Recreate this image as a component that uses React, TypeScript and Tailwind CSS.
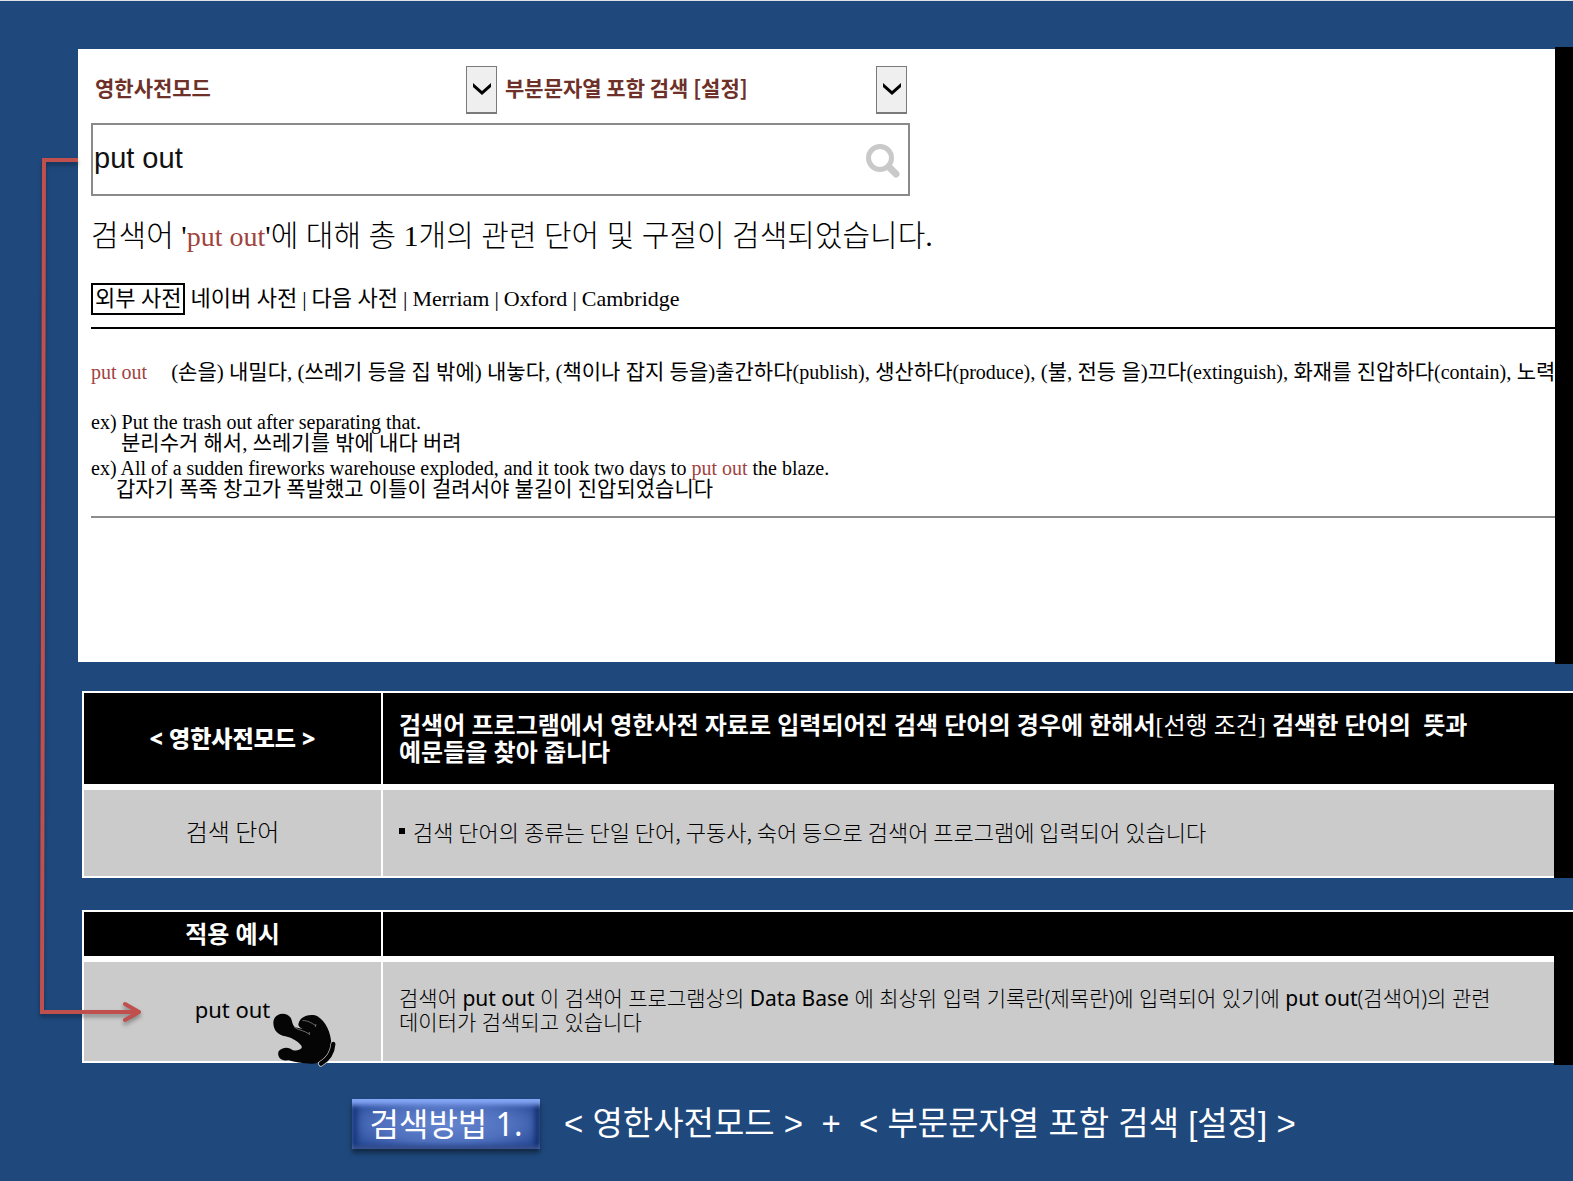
import type { ReactNode } from "react";

function Chevron() {
  return (
    <span className="pointer-events-none absolute right-0 top-0 flex h-full w-[31px] items-center justify-center border border-b-2 border-[#7a7a7a] bg-[#efefef]">
      <svg width="20" height="16" viewBox="0 0 20 16">
        <path d="M1 1v4l9 8 9-8V1l-9 8z" fill="#000" />
      </svg>
    </span>
  );
}

function ModeSelect({ name, value }: { name: string; value: string }) {
  return (
    <div className="relative h-12 flex-1">
      <select
        aria-label={name}
        className="h-full w-full appearance-none bg-white pb-1 pl-1 pr-8 text-[21px] font-bold text-[#6e3129] outline-none"
      >
        <option>{value}</option>
      </select>
      <Chevron />
    </div>
  );
}

function Hit({ children }: { children: ReactNode }) {
  return <span className="text-[#a0433f]">{children}</span>;
}

function Latin({ children }: { children: ReactNode }) {
  return <span className="text-[20px]">{children}</span>;
}

function Connector() {
  return (
    <svg
      className="pointer-events-none absolute left-0 top-0 drop-shadow-[0_3px_2px_rgba(0,0,0,0.35)]"
      width="160"
      height="1040"
      viewBox="0 0 160 1040"
      fill="none"
      stroke="#c0504d"
      strokeWidth="4"
    >
      <path d="M78 159H44L42 1011H138" />
      <path d="M125 1003L139 1011L125 1019" strokeLinecap="round" strokeLinejoin="round" />
    </svg>
  );
}

function Hand() {
  return (
    <svg
      className="pointer-events-none absolute left-[188px] top-[50px]"
      width="66"
      height="56"
      viewBox="66 66 198 168"
    >
      <path
        d="M98 71C82 71 70 83 70 98C70 122 85 134 106 139C128 144 146 155 155 169C158 177 142 183 128 181C118 170 96 171 86 184C80 200 93 214 116 211C135 216 160 222 190 221C222 219 240 192 244 165C244 128 225 86 195 76C172 71 148 82 145 104C145 108 150 113 158 117L136 112C126 104 128 94 122 83C116 75 108 71 98 71Z"
        fill="#050505"
      />
      <path
        d="M132 111C144 121 160 120 178 132M178 126V135M158 92C172 91 184 98 197 107M198 102L196 111"
        fill="none"
        stroke="#9a9a9a"
        strokeWidth="2"
      />
      <path d="M250 162C248 188 236 207 213 221" fill="none" stroke="#d6d6d6" strokeWidth="17" strokeLinecap="round" />
      <path d="M250 162C248 188 236 207 213 221" fill="none" stroke="#050505" strokeWidth="13" strokeLinecap="round" />
    </svg>
  );
}

export default function App() {
  return (
    <div className="relative min-h-screen overflow-hidden border-t border-[#dfe3e6] bg-[#1f497d] pb-8 pt-[46px] font-['Noto_Sans','Noto_Sans_CJK_KR',sans-serif] text-black">
      <section className="ml-[78px] flex">
        <div className="my-[2px] min-w-0 flex-1 overflow-hidden bg-white pb-36 pl-[13px] pt-[17px] font-['Liberation_Serif','Noto_Sans_CJK_KR',serif]">
          <form className="w-full max-w-[819px]">
            <div className="mr-[3px] flex gap-1 font-['Noto_Sans_CJK_KR',sans-serif]">
              <ModeSelect name="사전 모드" value="영한사전모드" />
              <ModeSelect name="검색 설정" value="부분문자열 포함 검색 [설정]" />
            </div>
            <div className="mt-[9px] flex h-[73px] items-center border-2 border-[#8a8a8a] pl-px pr-2">
              <input
                aria-label="검색어"
                defaultValue="put out"
                className="h-full min-w-0 flex-1 pb-[2px] font-['Liberation_Sans',sans-serif] text-[29px] text-[#111] outline-none"
              />
              <button type="button" aria-label="검색">
                <svg width="36" height="36" viewBox="0 0 36 36" fill="none" stroke="#c9c9c9">
                  <circle cx="16" cy="16" r="11.5" strokeWidth="5" />
                  <path d="M25 25l7 7" strokeWidth="7" strokeLinecap="round" />
                </svg>
              </button>
            </div>
          </form>

          <p className="mt-[22px] whitespace-nowrap text-[30px] font-light leading-9">
            검색어 '
            <span className="text-[28px]">
              <Hit>put out</Hit>
            </span>
            '에 대해 총 1개의 관련 단어 및 구절이 검색되었습니다.
          </p>

          <nav className="mt-7 flex h-8 items-center gap-[5px] whitespace-nowrap text-[22px] leading-7">
            <span className="flex h-8 items-center border-2 border-black px-[2px]">외부 사전</span>
            <a href="#naver">네이버 사전</a>|
            <a href="#daum">다음 사전</a>|
            <a href="#merriam">Merriam</a>|
            <a href="#oxford">Oxford</a>|
            <a href="#cambridge">Cambridge</a>
          </nav>
          <hr className="mt-3 border-t-2 border-black" />

          <div className="mt-[31px] flex gap-6 whitespace-nowrap text-[21px] leading-6">
            <Latin>
              <Hit>put out</Hit>
            </Latin>
            <p>
              (손을) 내밀다, (쓰레기 등을 집 밖에) 내놓다, (책이나 잡지 등을)출간하다<Latin>(publish)</Latin>, 생산하다
              <Latin>(produce)</Latin>, (불, 전등 을)끄다<Latin>(extinguish)</Latin>, 화재를 진압하다
              <Latin>(contain)</Latin>, 노력
            </p>
          </div>

          <div className="mt-7 flex flex-col gap-1 whitespace-nowrap text-[21px] leading-[21px]">
            <div>
              <p className="text-[20px]">ex) Put the trash out after separating that.</p>
              <p className="pl-[30px]">분리수거 해서, 쓰레기를 밖에 내다 버려</p>
            </div>
            <div>
              <p className="text-[20px]">
                ex) All of a sudden fireworks warehouse exploded, and it took two days to <Hit>put out</Hit> the blaze.
              </p>
              <p className="pl-[25px]">갑자기 폭죽 창고가 폭발했고 이틀이 걸려서야 불길이 진압되었습니다</p>
            </div>
          </div>
          <hr className="mt-4 border-t-2 border-[#8c8c8c]" />
        </div>
        <div className="w-[18px] bg-black" />
      </section>

      <section className="ml-[82px] mt-[27px] flex border-t-2 border-white">
        <table className="flex-1 table-fixed border-separate border-spacing-0">
          <colgroup>
            <col className="w-[299px]" />
            <col />
          </colgroup>
          <thead>
            <tr className="h-[97px] bg-black text-white">
              <th className="border-b-[6px] border-l-2 border-white text-[23px] font-black">&lt; 영한사전모드 &gt;</th>
              <th className="border-b-[6px] border-l-2 border-white px-4 text-left text-[24px] font-bold leading-[26px]">
                검색어 프로그램에서 영한사전 자료로 입력되어진 검색 단어의 경우에 한해서
                <span className="font-['Liberation_Serif','Noto_Sans_CJK_KR',serif] font-normal">[선행 조건]</span> 검색한
                단어의&nbsp; 뜻과
                <br />
                예문들을 찾아 줍니다
              </th>
            </tr>
          </thead>
          <tbody>
            <tr className="h-[88px] bg-[#cbcbcb] font-['Noto_Sans_CJK_KR',sans-serif] font-light">
              <td className="border-b-2 border-l-2 border-white pb-1 text-center text-[24px]">검색 단어</td>
              <td className="border-b-2 border-l-2 border-white px-4 pb-1 text-[22px]">
                <div className="flex items-center gap-2">
                  <span className="h-[6px] w-[6px] bg-black" />
                  검색 단어의 종류는 단일 단어, 구동사, 숙어 등으로 검색어 프로그램에 입력되어 있습니다
                </div>
              </td>
            </tr>
          </tbody>
        </table>
        <div className="w-[19px] bg-black" />
      </section>

      <section className="ml-[82px] mt-8 flex border-t-2 border-white">
        <table className="flex-1 table-fixed border-separate border-spacing-0">
          <colgroup>
            <col className="w-[299px]" />
            <col />
          </colgroup>
          <thead>
            <tr className="h-[50px] bg-black text-white">
              <th className="border-b-[6px] border-l-2 border-white text-[24px] font-bold leading-8">적용 예시</th>
              <th className="border-b-[6px] border-l-2 border-white" />
            </tr>
          </thead>
          <tbody>
            <tr className="h-[101px] bg-[#cbcbcb]">
              <td className="relative border-b-2 border-l-2 border-white pb-1 text-center text-[22px]">
                put out
                <Hand />
              </td>
              <td className="border-b-2 border-l-2 border-white px-4 pb-1 text-[21px] font-light leading-6">
                검색어 <span className="font-normal">put out</span> 이 검색어 프로그램상의{" "}
                <span className="font-normal">Data Base</span> 에 최상위 입력 기록란(제목란)에 입력되어 있기에{" "}
                <span className="font-normal">put out</span>(검색어)의 관련
                <br />
                데이터가 검색되고 있습니다
              </td>
            </tr>
          </tbody>
        </table>
        <div className="-mb-[2px] w-[19px] bg-black" />
      </section>

      <footer className="ml-[352px] mt-9 flex items-center gap-6 whitespace-nowrap text-white">
        <button
          type="button"
          className="flex h-[50px] w-[188px] items-center justify-center bg-[radial-gradient(ellipse_at_center,#6585d0_0%,#4f70bd_50%,#1b3f8c_100%)] text-[32px] shadow-[inset_0_8px_5px_-2px_#86a6f5,inset_0_-5px_4px_-2px_#3c548f,inset_6px_0_6px_-1px_#153579,inset_-6px_0_6px_-1px_#102c69,0_4px_5px_rgba(0,0,0,0.45)]"
        >
          검색방법 1.
        </button>
        <p className="whitespace-pre font-['Liberation_Sans','Noto_Sans_CJK_KR',sans-serif] text-[33px] leading-[46px]">
          {"< 영한사전모드 >  +  < 부문문자열 포함 검색 [설정] >"}
        </p>
      </footer>

      <Connector />
    </div>
  );
}
